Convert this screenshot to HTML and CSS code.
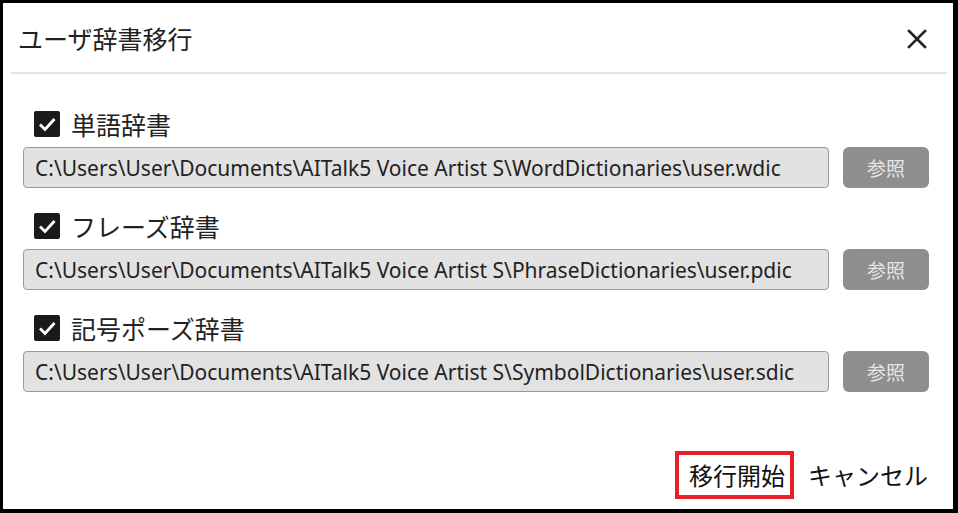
FILE: index.html
```html
<!DOCTYPE html>
<html lang="ja">
<head>
<meta charset="utf-8">
<title>ユーザ辞書移行</title>
<link rel="stylesheet" href="styles.css">
</head>
<body>
<div class="dialog">
  <div class="header">
    <div class="title">ユーザ辞書移行</div>
    <svg class="close" width="20" height="20" viewBox="0 0 20 20"><path d="M2 2 L18 18 M18 2 L2 18" stroke="#222" stroke-width="2.6" stroke-linecap="square"/></svg>
  </div>
  <div class="rule"></div>
  <div class="content">
    <div class="group">
      <label class="check-row">
        <span class="box"><svg width="26" height="26" viewBox="0 0 26 26"><path d="M6 13.5 L11 18.5 L20.5 8" fill="none" stroke="#fff" stroke-width="2.8"/></svg></span>
        <span class="label">単語辞書</span>
      </label>
      <div class="path-row">
        <div class="path">C:\Users\User\Documents\AITalk5 Voice Artist S\WordDictionaries\user.wdic</div>
        <div class="browse">参照</div>
      </div>
    </div>
    <div class="group">
      <label class="check-row">
        <span class="box"><svg width="26" height="26" viewBox="0 0 26 26"><path d="M6 13.5 L11 18.5 L20.5 8" fill="none" stroke="#fff" stroke-width="2.8"/></svg></span>
        <span class="label">フレーズ辞書</span>
      </label>
      <div class="path-row">
        <div class="path">C:\Users\User\Documents\AITalk5 Voice Artist S\PhraseDictionaries\user.pdic</div>
        <div class="browse">参照</div>
      </div>
    </div>
    <div class="group">
      <label class="check-row">
        <span class="box"><svg width="26" height="26" viewBox="0 0 26 26"><path d="M6 13.5 L11 18.5 L20.5 8" fill="none" stroke="#fff" stroke-width="2.8"/></svg></span>
        <span class="label">記号ポーズ辞書</span>
      </label>
      <div class="path-row">
        <div class="path">C:\Users\User\Documents\AITalk5 Voice Artist S\SymbolDictionaries\user.sdic</div>
        <div class="browse">参照</div>
      </div>
    </div>
  </div>
  <div class="footer">
    <div class="btn primary">移行開始</div>
    <div class="btn">キャンセル</div>
  </div>
</div>
</body>
</html>
```
FILE: styles.css
```css
html, body {
  margin: 0;
  padding: 0;
}
body {
  background: #000;
  width: 958px;
  height: 513px;
  overflow: hidden;
  font-family: "Noto Sans", "Noto Sans CJK JP", sans-serif;
  color: #222;
}
.dialog {
  margin: 3px 5px 4px 3px;
  height: 506px;
  background: #fff;
  display: flex;
  flex-direction: column;
}
.header {
  height: 69px;
  display: flex;
  align-items: center;
  justify-content: space-between;
  padding: 0 26px 0 15px;
}
.title {
  font-family: "Noto Sans CJK JP", sans-serif;
  font-size: 25px;
  line-height: 1;
  margin-top: 2px;
}
.close {
  display: block;
  margin-top: 2px;
}
.rule {
  height: 2px;
  background: #e4e4e4;
  margin: 0 6px 0 8px;
}
.content {
  padding: 37px 24px 0 20px;
  display: flex;
  flex-direction: column;
  gap: 25px;
}
.group {
  display: flex;
  flex-direction: column;
  gap: 10px;
}
.check-row {
  display: flex;
  align-items: center;
  padding-left: 11px;
  height: 26px;
}
.box {
  width: 26px;
  height: 26px;
  background: #1a1a1a;
  border-radius: 2px;
  display: block;
}
.box svg {
  display: block;
}
.label {
  font-family: "Noto Sans CJK JP", sans-serif;
  font-size: 25px;
  line-height: 1;
  margin-left: 11px;
}
.path-row {
  display: flex;
  align-items: center;
  gap: 14px;
}
.path {
  flex: 1;
  height: 41px;
  box-sizing: border-box;
  border: 1px solid #9a9a9a;
  border-radius: 4px;
  background: #e2e2e2;
  display: flex;
  align-items: center;
  padding-left: 11px;
  font-size: 21px;
  color: #222;
  white-space: nowrap;
}
.browse {
  width: 86px;
  height: 41px;
  border-radius: 6px;
  background: #8e8e8e;
  color: #e6e6e6;
  font-family: "Noto Sans CJK JP", sans-serif;
  font-size: 19px;
  display: flex;
  align-items: center;
  justify-content: center;
}
.footer {
  margin-top: auto;
  display: flex;
  justify-content: flex-end;
  align-items: center;
  gap: 14px;
  padding: 0 25px 10px 0;
}
.btn {
  font-family: "Noto Sans CJK JP", sans-serif;
  font-size: 24px;
  line-height: 1;
  color: #111;
}
.btn.primary {
  box-sizing: border-box;
  height: 48px;
  width: 119px;
  border: 4px solid #e8202a;
  padding: 0 0 0 10px;
  display: flex;
  align-items: center;
}
```
